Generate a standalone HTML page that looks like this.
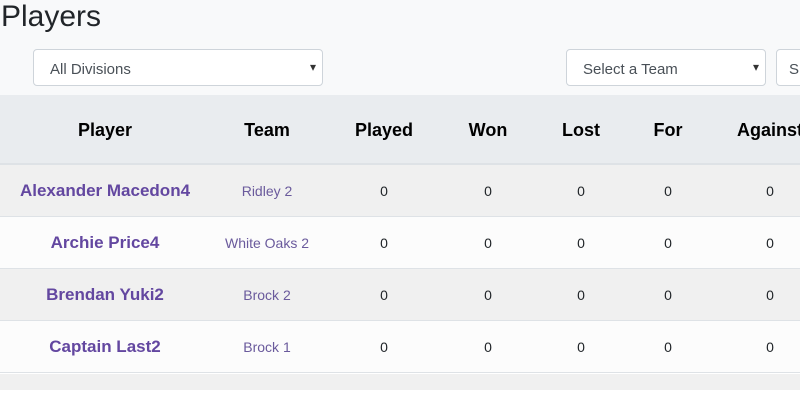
<!DOCTYPE html>
<html><head><meta charset="utf-8"><style>
html,body{margin:0;padding:0;width:800px;height:402px;overflow:hidden;background:#fff;font-family:"Liberation Sans",sans-serif;}
.top{background:#f8f9fa;height:95px;position:relative;}
h1{margin:0;position:absolute;left:1px;top:0px;font-size:30px;line-height:34px;font-weight:normal;color:#212529;}
.sel{position:absolute;top:49px;height:37px;background:#fff;border:1px solid #ced4da;border-radius:4px;box-sizing:border-box;font-size:15px;color:#495057;line-height:39px;padding-left:16px;}
.sel:after{content:"▾";position:absolute;right:6px;top:-2px;font-size:12px;color:#333;}
table{position:absolute;top:95px;left:0;border-collapse:collapse;table-layout:fixed;width:834px;}
th{background:#e9ecef;height:69px;box-sizing:border-box;font-size:18px;font-weight:bold;color:#000;border-bottom:2px solid #dee2e6;padding:3px 0 0 0;}
td{height:51px;text-align:center;font-size:14px;color:#212529;border-bottom:1px solid #dee2e6;padding:0;}
tr.g td{background:#f0f0f0;}
tr.w td{background:#fcfcfc;}
td.n{font-weight:bold;font-size:17px;color:#6347a0;}
td.t{color:#6a5a9c;}
.end{position:absolute;left:0;top:374px;width:800px;height:16px;background:#f0f0f0;}
</style></head><body>
<div class="top"><h1>Players</h1>
<div class="sel" style="left:33px;width:290px">All Divisions</div>
<div class="sel" style="left:566px;width:200px">Select a Team</div>
<div class="sel" style="left:776px;width:60px;padding-left:12px">S</div>
</div>
<table>
<colgroup><col style="width:210px"><col style="width:114px"><col style="width:120px"><col style="width:88px"><col style="width:98px"><col style="width:76px"><col style="width:128px"></colgroup>
<tr><th>Player</th><th>Team</th><th>Played</th><th>Won</th><th>Lost</th><th>For</th><th>Against</th></tr>
<tr class="g"><td class="n">Alexander Macedon4</td><td class="t">Ridley 2</td><td>0</td><td>0</td><td>0</td><td>0</td><td>0</td></tr>
<tr class="w"><td class="n">Archie Price4</td><td class="t">White Oaks 2</td><td>0</td><td>0</td><td>0</td><td>0</td><td>0</td></tr>
<tr class="g"><td class="n">Brendan Yuki2</td><td class="t">Brock 2</td><td>0</td><td>0</td><td>0</td><td>0</td><td>0</td></tr>
<tr class="w"><td class="n">Captain Last2</td><td class="t">Brock 1</td><td>0</td><td>0</td><td>0</td><td>0</td><td>0</td></tr>
</table>
<div class="end"></div>
</body></html>
